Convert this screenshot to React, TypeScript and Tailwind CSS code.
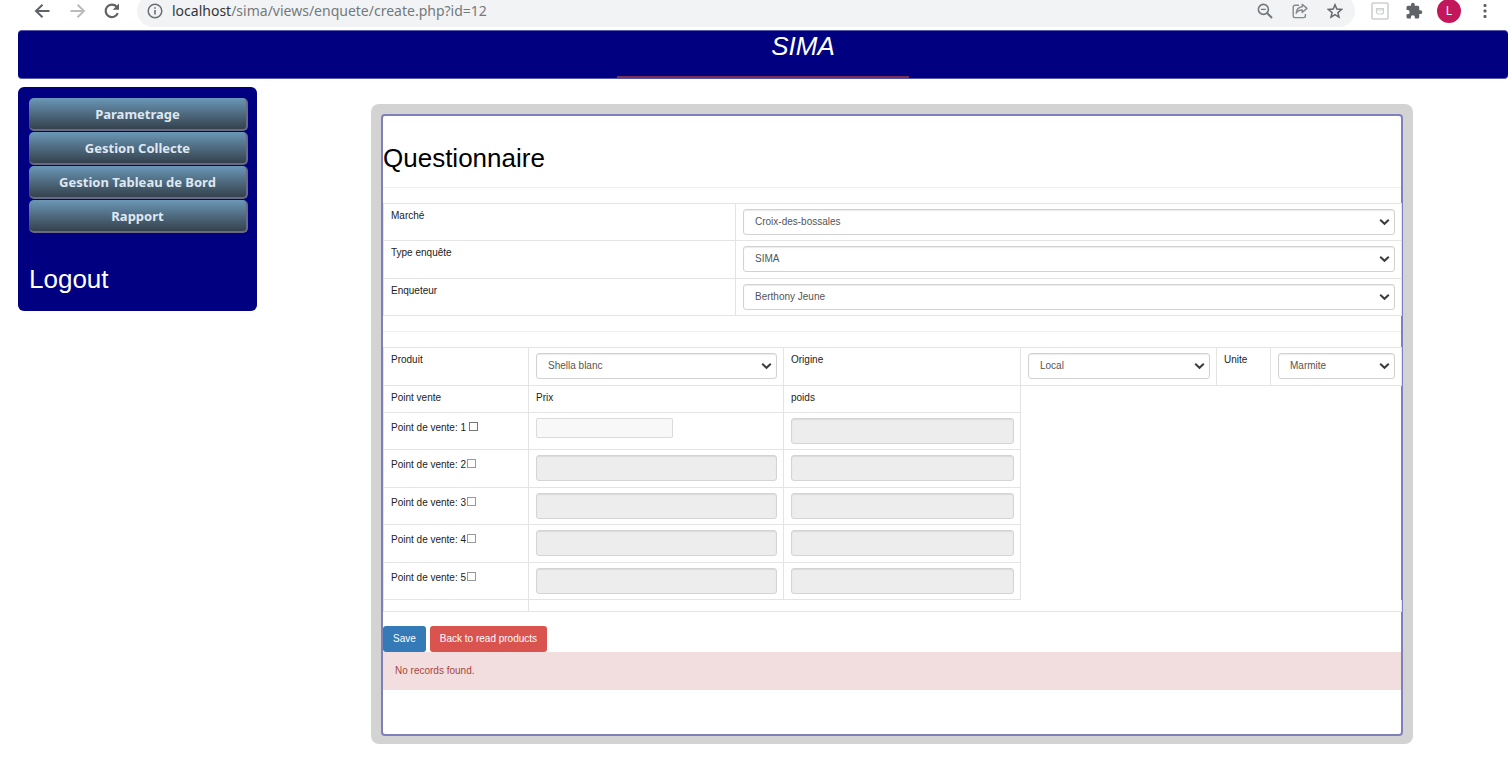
import React from "react";

function BackIcon() {
  return (
    <svg width="16" height="16" viewBox="0 0 16 16" fill="none" stroke="#5f6368" strokeWidth="2">
      <path d="M15.5 8H2M8.5 1.8L2 8l6.5 6.2" />
    </svg>
  );
}

function ForwardIcon() {
  return (
    <svg width="16" height="16" viewBox="0 0 16 16" fill="none" stroke="#b9bbbe" strokeWidth="2">
      <path d="M.5 8H14M7.5 1.8L14 8l-6.5 6.2" />
    </svg>
  );
}

function ReloadIcon() {
  return (
    <svg width="18" height="18" viewBox="0 0 18 18" fill="none">
      <path d="M14.8 11.2A6.3 6.3 0 1 1 13.6 4.6" stroke="#5f6368" strokeWidth="2.2" />
      <path d="M16 1.5v6.3H9.7z" fill="#5f6368" />
    </svg>
  );
}

function InfoIcon() {
  return (
    <svg width="16" height="16" viewBox="0 0 16 16" fill="none" stroke="#6b6f74">
      <circle cx="8" cy="8" r="6.8" strokeWidth="1.5" />
      <path d="M8 7v4.6M8 4.2v1.6" strokeWidth="1.6" />
    </svg>
  );
}

function ZoomIcon() {
  return (
    <svg width="16" height="16" viewBox="0 0 16 16" fill="none" stroke="#74787c">
      <circle cx="6.4" cy="6.4" r="5" strokeWidth="1.6" />
      <path d="M10 10l5 5" strokeWidth="2" />
      <path d="M4 6.4h4.8" strokeWidth="1.3" />
    </svg>
  );
}

function ShareIcon() {
  return (
    <svg width="16" height="16" viewBox="0 0 16 16" fill="none" stroke="#85898d" strokeWidth="1.4">
      <path d="M7 2.2H3A1.8 1.8 0 0 0 1.2 4v8.8a1.8 1.8 0 0 0 1.8 1.8h8.6a1.8 1.8 0 0 0 1.8-1.8V11" />
      <path d="M10.2 1.4L15 5.4l-4.8 4V7C7.2 7 5.4 8 4.2 10.2c.3-3.4 2.4-6 6-6.4z" strokeLinejoin="round" />
    </svg>
  );
}

function StarIcon() {
  return (
    <svg width="16" height="16" viewBox="0 0 16 16" fill="none" stroke="#66696d" strokeWidth="1.5">
      <path d="M8 1.8l1.8 4.3 4.7.4-3.6 3.1 1.1 4.6L8 11.7l-4 2.5 1.1-4.6L1.5 6.5l4.7-.4z" />
    </svg>
  );
}

function ExtensionFrameIcon() {
  return (
    <svg width="18" height="18" viewBox="0 0 18 18" fill="none" stroke="#cdd0cf">
      <rect x="1" y="1" width="16" height="16" rx="1" strokeWidth="1.6" />
      <path d="M5.5 6.5h7v3.5a2 2 0 0 1-2 2h-3a2 2 0 0 1-2-2zM5.5 8h7" strokeWidth="1.2" />
    </svg>
  );
}

function PuzzleIcon() {
  return (
    <svg width="18" height="18" viewBox="0 0 24 24" fill="#5f6368">
      <path d="M20.5 11H19V7a2 2 0 0 0-2-2h-4V3.500a2.500 2.500 0 0 0-5 0V5H4a2 2 0 0 0-2 2v3.800h1.500a2.700 2.700 0 0 1 0 5.400H2V20a2 2 0 0 0 2 2h3.800v-1.500a2.700 2.700 0 0 1 5.400 0V22H17a2 2 0 0 0 2-2v-4h1.500a2.500 2.500 0 0 0 0-5z" />
    </svg>
  );
}

function DotsIcon() {
  return (
    <svg width="4" height="16" viewBox="0 0 4 16" fill="#5f6368">
      <rect x=".5" y="1" width="3" height="3" rx="1" />
      <rect x=".5" y="6.500" width="3" height="3" rx="1" />
      <rect x=".5" y="12" width="3" height="3" rx="1" />
    </svg>
  );
}

function BrowserBar() {
  return (
    <div className="h-[30px] overflow-hidden font-['Noto_Sans',sans-serif]">
      <div className="flex h-[22px] items-center pl-[34px] pr-[23px]">
        <button aria-label="Back"><BackIcon /></button>
        <button aria-label="Forward" className="ml-5"><ForwardIcon /></button>
        <button aria-label="Reload" className="ml-[17px]"><ReloadIcon /></button>
        <div className="ml-4 flex h-8 flex-1 items-center rounded-full bg-[#f1f3f4] pl-[10px] pr-3">
          <InfoIcon />
          <span className="ml-[9px] text-[14px] leading-5 text-[#75797d]">
            <span className="text-[#33363a]">localhost</span>/sima/views/enquete/create.php?id=12
          </span>
          <div className="ml-auto flex items-center gap-[19px]">
            <button aria-label="Zoom"><ZoomIcon /></button>
            <button aria-label="Share"><ShareIcon /></button>
            <button aria-label="Bookmark"><StarIcon /></button>
          </div>
        </div>
        <button aria-label="Extension" className="ml-4"><ExtensionFrameIcon /></button>
        <button aria-label="Extensions" className="ml-4"><PuzzleIcon /></button>
        <button
          aria-label="Profile"
          className="ml-[14px] flex size-6 items-center justify-center rounded-full bg-[#c2185b] text-[12px] text-white"
        >
          L
        </button>
        <button aria-label="Menu" className="ml-[22px]"><DotsIcon /></button>
      </div>
    </div>
  );
}

const menu = ["Parametrage", "Gestion Collecte", "Gestion Tableau de Bord", "Rapport"];

function Sidebar() {
  return (
    <nav className="w-[239px] shrink-0 rounded-md bg-[#000080] pb-4 pl-[11px] pr-[9px] pt-[11px]">
      <ul className="flex flex-col gap-px">
        {menu.map((item) => (
          <li key={item}>
            <button className="h-[33px] w-full rounded-[5px] border-b-2 border-r-2 border-[#6a6a88] bg-linear-to-b from-[#6b98b8] to-[#35424d] font-['Noto_Sans',sans-serif] text-[13px] font-bold leading-5 text-[#dfe8f1]">
              {item}
            </button>
          </li>
        ))}
      </ul>
      <a href="#logout" className="mt-[30px] block text-[26px] leading-8 text-white">
        Logout
      </a>
    </nav>
  );
}

function Select({ id, value }: { id: string; value: string }) {
  return (
    <div className="relative">
      <select
        id={id}
        defaultValue={value}
        className="block h-[26px] w-full appearance-none rounded-[3px] border border-[#d2d2d2] bg-white pl-[11px] pr-6 text-[10px] text-[#555] shadow-[inset_0_1px_1px_rgba(0,0,0,0.08)]"
      >
        <option>{value}</option>
      </select>
      <svg
        className="pointer-events-none absolute right-[5px] top-[9px]"
        width="11"
        height="8"
        viewBox="0 0 11 8"
        fill="none"
        stroke="#3c3c3c"
        strokeWidth="2"
      >
        <path d="M1.2 1.8l4.3 4 4.3-4" />
      </svg>
    </div>
  );
}

const cell = "border border-[#e4e4e4] pl-[7px] pr-[6px] py-[5px] align-top text-left font-normal";
const pointCell = "border border-[#e4e4e4] pl-[7px] pr-[6px] pt-2 align-top";
const disabledInput =
  "block h-[26px] w-full rounded-[3px] border border-[#d4d4d4] bg-[#ededed] shadow-[inset_0_1px_1px_rgba(0,0,0,0.08)]";

const survey = [
  { id: "marche", label: "Marché", value: "Croix-des-bossales" },
  { id: "type", label: "Type enquête", value: "SIMA" },
  { id: "enqueteur", label: "Enqueteur", value: "Berthony Jeune" },
];

function SurveyTable() {
  return (
    <table className="mt-[15px] h-[113px] w-full table-fixed border-collapse">
      <colgroup>
        <col className="w-[352px]" />
        <col className="w-[666px]" />
      </colgroup>
      <tbody>
        {survey.map((row) => (
          <tr key={row.id}>
            <td className={cell}>
              <label htmlFor={row.id}>{row.label}</label>
            </td>
            <td className={cell}>
              <Select id={row.id} value={row.value} />
            </td>
          </tr>
        ))}
      </tbody>
    </table>
  );
}

function ProductTable() {
  return (
    <table className="mt-[15px] h-[265px] w-full table-fixed border-collapse">
      <colgroup>
        <col className="w-[145px]" />
        <col className="w-[255px]" />
        <col className="w-[237px]" />
        <col className="w-[196px]" />
        <col className="w-[54px]" />
        <col className="w-[131px]" />
      </colgroup>
      <tbody>
        <tr>
          <td className={cell}><label htmlFor="produit">Produit</label></td>
          <td className={cell}><Select id="produit" value="Shella blanc" /></td>
          <td className={cell}><label htmlFor="origine">Origine</label></td>
          <td className={cell}><Select id="origine" value="Local" /></td>
          <td className={cell}><label htmlFor="unite">Unite</label></td>
          <td className={cell}><Select id="unite" value="Marmite" /></td>
        </tr>
        <tr className="h-[27px]">
          <th className={cell}>Point vente</th>
          <th className={cell}>Prix</th>
          <th className={cell}>poids</th>
        </tr>
        {[1, 2, 3, 4, 5].map((n) => (
          <tr key={n}>
            <td className={pointCell}>
              <label htmlFor={`point-${n}`}>Point de vente: {n}</label>
              <input
                id={`point-${n}`}
                type="checkbox"
                className={
                  n === 1
                    ? "ml-[3px] size-[9px] appearance-none border border-[#777] bg-white"
                    : "ml-px size-[9px] appearance-none border border-[#999] bg-white"
                }
              />
            </td>
            <td className={cell}>
              <input
                aria-label={`Prix ${n}`}
                disabled
                className={
                  n === 1
                    ? "block h-5 w-[137px] rounded-[2px] border border-[#dadada] bg-[#f8f8f8]"
                    : disabledInput
                }
              />
            </td>
            <td className={cell}>
              <input aria-label={`Poids ${n}`} disabled className={disabledInput} />
            </td>
          </tr>
        ))}
        <tr className="h-3">
          <td className="border border-[#e4e4e4]" />
          <td colSpan={5} className="border-x border-b border-[#e4e4e4]" />
        </tr>
      </tbody>
    </table>
  );
}

export default function App() {
  return (
    <div className="bg-white font-['Liberation_Sans',Arial,sans-serif] text-[10px] leading-[14px] text-[#222]">
      <BrowserBar />
      <div className="pl-[18px] pr-[2px]">
        <header className="flex h-[49px] flex-col items-center justify-between rounded-[4px] border-y border-[#5a5aae] bg-[#000080]">
          <h1 className="pl-20 text-[26px] italic leading-[30px] text-white">SIMA</h1>
          <div className="h-[2px] w-[292px] bg-[#7a3050]" />
        </header>
        <div className="mt-2 flex items-start">
          <Sidebar />
          <main className="ml-[114px] mr-[95px] mt-[17px] min-w-0 flex-1 rounded-lg bg-[#d3d3d3] px-[10px] pb-2 pt-[10px]">
            <form className="rounded-[4px] border-2 border-[#7f7fbc] bg-white pb-[44px] pt-6">
              <h2 className="text-[26px] leading-9 text-black">Questionnaire</h2>
              <hr className="mt-[11px] border-[#eeeeee]" />
              <SurveyTable />
              <hr className="mt-[15px] border-[#eeeeee]" />
              <ProductTable />
              <div className="mt-[14px] flex gap-1">
                <button type="button" className="h-[26px] rounded-[3px] bg-[#337ab7] px-[10px] text-white">
                  Save
                </button>
                <button type="button" className="h-[26px] rounded-[3px] bg-[#d9534f] px-[10px] text-white">
                  Back to read products
                </button>
              </div>
              <div className="bg-[#f2dede] px-3 py-3 text-[#a94442]">No records found.</div>
            </form>
          </main>
        </div>
      </div>
    </div>
  );
}
